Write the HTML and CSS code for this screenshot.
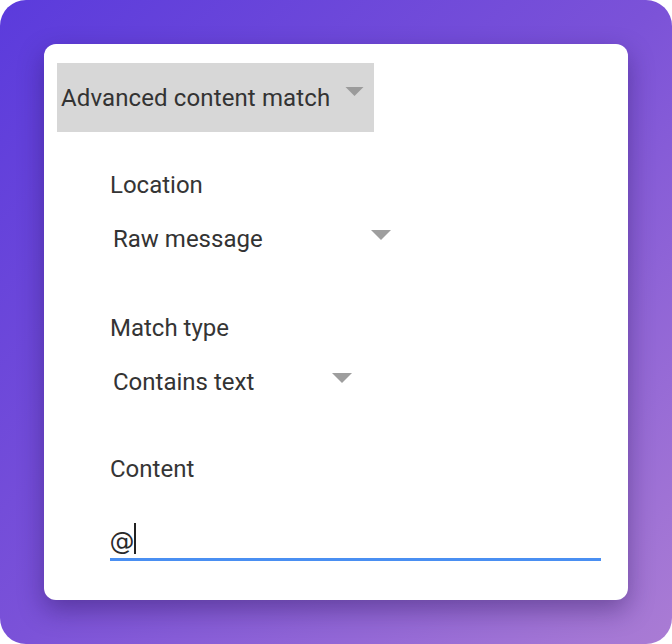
FILE: index.html
```html
<!DOCTYPE html>
<html>
<head>
<meta charset="utf-8">
<link rel="stylesheet" href="styles.css">
</head>
<body>
<div class="frame">
  <div class="card">
    <div class="type-select">
      <span class="type-label">Advanced content match</span>
      <svg class="arrow arrow-top" viewBox="0 0 20 10" width="19" height="9"><polygon points="0,0 20,0 10,10" fill="#9b9b9b"/></svg>
    </div>
    <div class="fields">
      <div class="label">Location</div>
      <div class="select select-raw">
        <span class="value">Raw message</span>
        <svg class="arrow" viewBox="0 0 20 10" width="20" height="10"><polygon points="0,0 20,0 10,10" fill="#9e9e9e"/></svg>
      </div>
      <div class="label label-gap">Match type</div>
      <div class="select select-contains">
        <span class="value">Contains text</span>
        <svg class="arrow" viewBox="0 0 20 10" width="20" height="10"><polygon points="0,0 20,0 10,10" fill="#9e9e9e"/></svg>
      </div>
      <div class="label label-gap2">Content</div>
      <div class="input">
        <span class="input-text">@</span><span class="caret"></span>
      </div>
    </div>
  </div>
</div>
</body>
</html>
```
FILE: styles.css
```css
html, body {
  margin: 0;
  padding: 0;
  background: #ffffff;
}
body {
  font-family: Roboto, "Liberation Sans", Arial, sans-serif;
}
.frame {
  width: 672px;
  height: 644px;
  box-sizing: border-box;
  padding: 44px;
  border-radius: 26px;
  background: linear-gradient(135deg, #5b3bdc 0%, #7b52d8 50%, #aa7cd4 100%);
}
.card {
  width: 584px;
  height: 556px;
  box-sizing: border-box;
  background: #ffffff;
  border-radius: 12px;
  box-shadow: 0 10px 26px rgba(30, 10, 70, 0.38);
  padding: 19px 0 0 12.5px;
}
.type-select {
  width: 317px;
  height: 69px;
  background: #d7d7d7;
  display: flex;
  align-items: center;
  box-sizing: border-box;
  padding-left: 4.5px;
}
.type-label {
  font-size: 24px;
  line-height: 28px;
  letter-spacing: 0.12px;
  color: #333333;
}
.arrow-top {
  margin-left: 15px;
  align-self: flex-start;
  margin-top: 24px;
}
.fields {
  padding-left: 53.5px;
  padding-top: 39px;
}
.label {
  font-size: 24px;
  line-height: 28px;
  color: #353535;
}
.label-gap {
  margin-top: 61px;
}
.label-gap2 {
  margin-top: 58.5px;
}
.select {
  display: flex;
  align-items: flex-start;
  margin-top: 26px;
  padding-left: 3px;
  box-sizing: border-box;
}
.select-raw {
  width: 281px;
}
.select-contains {
  width: 242px;
}
.value {
  font-size: 24px;
  line-height: 28px;
  color: #333333;
}
.select .arrow {
  margin-left: auto;
  margin-top: 5px;
}
.input {
  margin-top: 41px;
  width: 491px;
  height: 34px;
  border-bottom: 3px solid #4a8ff2;
  display: flex;
  align-items: flex-end;
  box-sizing: content-box;
  margin-left: -0.5px;
}
.input-text {
  font-size: 25px;
  line-height: 30px;
  color: #2a2a2a;
  font-family: "DejaVu Sans", Roboto, sans-serif;
  padding-bottom: 1px;
}
.caret {
  display: inline-block;
  width: 2px;
  height: 31px;
  background: #222222;
  margin-left: -1px;
  margin-bottom: 4px;
}
```
